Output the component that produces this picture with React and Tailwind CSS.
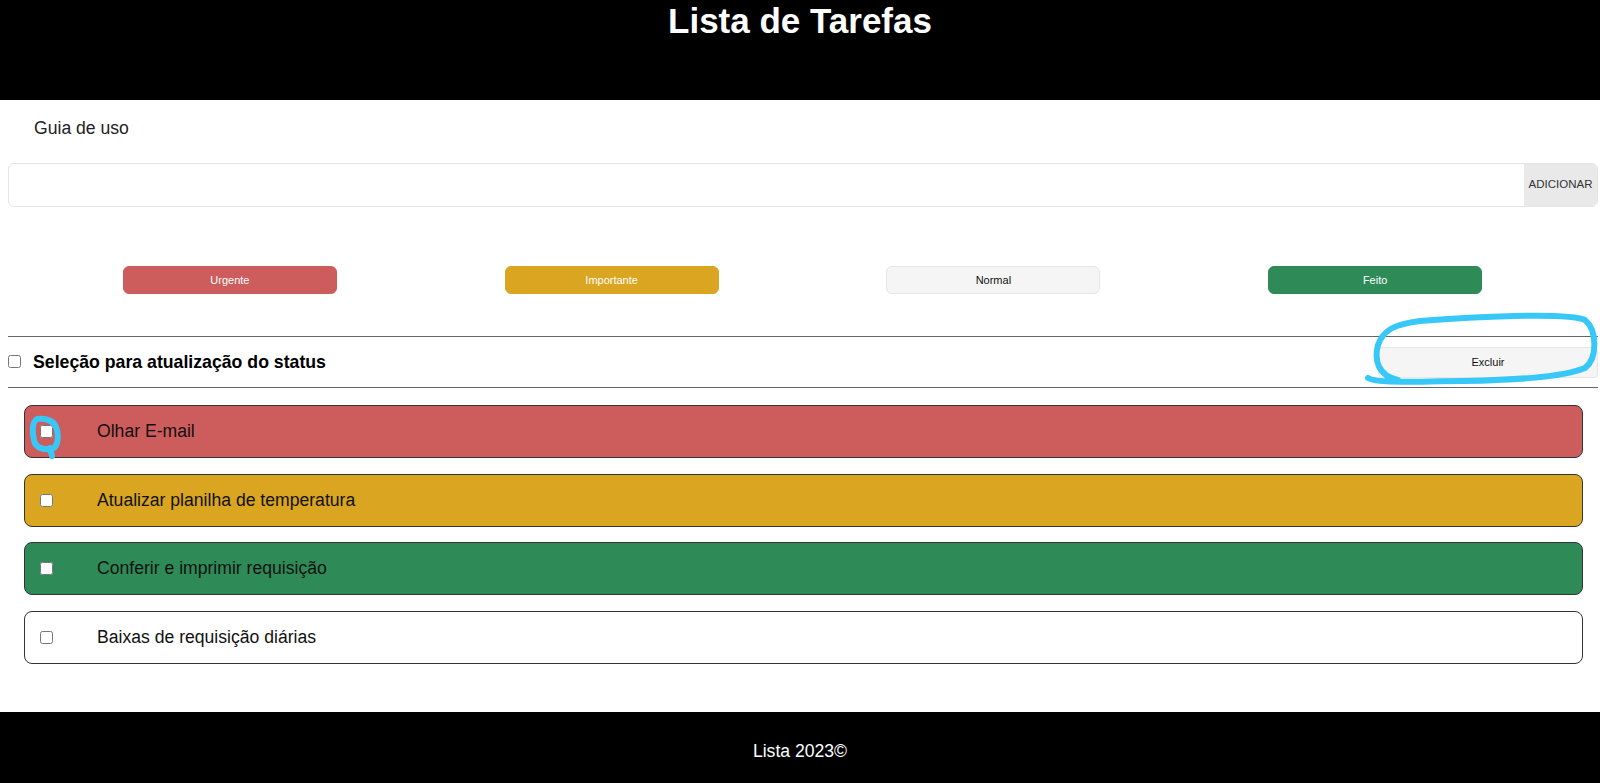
import React, { useState } from 'react'

const statusButtons = [
  { label: 'Urgente', cls: 'bg-[#cd5c5c] text-white border-[#cd5c5c]' },
  { label: 'Importante', cls: 'bg-[#daa520] text-white border-[#daa520]' },
  { label: 'Normal', cls: 'bg-[#f5f5f5] text-[#111] border-[#e6e6e6]' },
  { label: 'Feito', cls: 'bg-[#2e8b57] text-white border-[#2e8b57]' },
]

const initialTasks = [
  { id: 1, text: 'Olhar E-mail', cls: 'bg-[#cd5c5c]' },
  { id: 2, text: 'Atualizar planilha de temperatura', cls: 'bg-[#daa520]' },
  { id: 3, text: 'Conferir e imprimir requisição', cls: 'bg-[#2e8b57]' },
  { id: 4, text: 'Baixas de requisição diárias', cls: 'bg-white' },
]

function TaskRow({ task }) {
  return (
    <div className={`flex items-center h-[53px] border border-[#333] rounded-[8px] pl-[15px] ${task.cls}`}>
      <input type="checkbox" className="m-0 w-[13px] h-[13px]" />
      <span className="ml-[44px] text-[17.6px] text-[#111]">{task.text}</span>
    </div>
  )
}

export default function App() {
  const [tasks] = useState(initialTasks)
  const [novaTarefa, setNovaTarefa] = useState('')

  return (
    <div
      className="relative min-h-screen flex flex-col bg-white"
      style={{ fontFamily: '"Liberation Sans", Arial, sans-serif' }}
    >
      {/* Header */}
      <header className="h-[100px] bg-black text-center">
        <h1 className="text-[35px] font-bold text-white leading-none pt-[3px]">Lista de Tarefas</h1>
      </header>

      <main className="flex-1">
        <div className="pl-[34px] pt-[17px] h-[63px] text-[17.6px] leading-[22px] text-[#222]">
          Guia de uso
        </div>

        {/* Input */}
        <div className="ml-[8px] mr-[2px] flex h-[44px] border border-[#e4e4e4] rounded-[6px] overflow-hidden">
          <input
            type="text"
            value={novaTarefa}
            onChange={(e) => setNovaTarefa(e.target.value)}
            className="flex-1 px-3 outline-none text-[16px]"
          />
          <button className="w-[73px] bg-[#e9e9e9] text-[11.5px] text-[#333]">ADICIONAR</button>
        </div>

        {/* Status buttons */}
        <div className="grid grid-cols-4 pl-[39px] pr-[34px] mt-[59px]">
          {statusButtons.map((b) => (
            <div key={b.label} className="flex justify-center">
              <button className={`w-[214px] h-[28px] rounded-[6px] border text-[11px] ${b.cls}`}>
                {b.label}
              </button>
            </div>
          ))}
        </div>

        {/* Selection row */}
        <div className="ml-[8px] mr-[2px] mt-[42px] border-t border-b border-[#666] h-[52px] flex items-center justify-between">
          <div className="flex items-center">
            <input type="checkbox" className="m-0 w-[13px] h-[13px]" />
            <span className="ml-[12px] text-[17.7px] font-bold text-black">Seleção para atualização do status</span>
          </div>
          <button className="w-[220px] h-[31px] bg-[#f5f5f5] border border-[#e6e6e6] rounded-[4px] text-[11px] text-[#111]">
            Excluir
          </button>
        </div>

        {/* Tasks */}
        <div className="ml-[24px] mr-[17px] mt-[17px] flex flex-col gap-[15.5px]">
          {tasks.map((t) => (
            <TaskRow key={t.id} task={t} />
          ))}
        </div>
      </main>

      {/* Footer */}
      <footer className="mt-[48px] h-[72px] bg-black flex items-center justify-center pt-[8px]">
        <span className="text-white text-[17.6px]">Lista 2023©</span>
      </footer>

      {/* hand-drawn annotations */}
      <svg className="absolute left-0 top-0 pointer-events-none" width="1600" height="783" viewBox="0 0 1600 783">
        <g fill="none" stroke="#38c8f8" strokeWidth="6" strokeLinecap="round" strokeLinejoin="round">
          <path d="M1368,378 C1378,384 1420,381 1463,381 C1510,380 1560,378 1585,368 C1598,358 1597,330 1585,320 C1568,312 1470,317 1420,321 C1395,324 1383,330 1378,345 C1374,360 1378,376 1398,380" />
          <path d="M37,419 C45,418 55,420 57,430 C59,440 57,449 50,449 C42,450 35,447 34,440 C32,432 32,422 37,419 Z M50,448 L52,456" />
        </g>
      </svg>
    </div>
  )
}
